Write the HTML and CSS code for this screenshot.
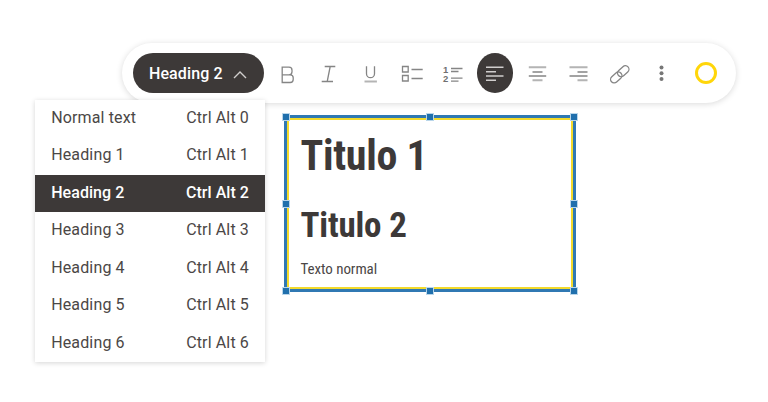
FILE: index.html
```html
<!DOCTYPE html>
<html lang="es">
<head>
<meta charset="utf-8">
<title>Editor</title>
<link rel="stylesheet" href="styles.css">
</head>
<body>
<div class="toolbar">
  <div class="picker">
    <button class="pill">Heading 2 <svg width="14" height="9" viewBox="0 0 14 9"><path d="M1 8 7 2l6 6"/></svg></button>
    <ul class="menu">
      <li><span>Normal text</span><span>Ctrl Alt 0</span></li>
      <li><span>Heading 1</span><span>Ctrl Alt 1</span></li>
      <li class="selected"><span>Heading 2</span><span>Ctrl Alt 2</span></li>
      <li><span>Heading 3</span><span>Ctrl Alt 3</span></li>
      <li><span>Heading 4</span><span>Ctrl Alt 4</span></li>
      <li><span>Heading 5</span><span>Ctrl Alt 5</span></li>
      <li><span>Heading 6</span><span>Ctrl Alt 6</span></li>
    </ul>
  </div>
  <div class="tools">
    <span class="tool"><svg viewBox="0 0 24 24"><path d="M7.200 4.200h6.800a3 3 0 0 1 3 3v1.600a3 3 0 0 1-3 3H7.200zM7.200 11.800h8a3 3 0 0 1 3 3v1.700a3 3 0 0 1-3 3H7.200z"/></svg></span>
    <span class="tool"><svg viewBox="0 0 24 24"><path d="M7.700 3.500h10.600M4.700 18.500h11.300M13.200 3.500l-3 15"/></svg></span>
    <span class="tool"><svg viewBox="0 0 24 24"><path d="M8.500 3.200v7.500a4 4 0 0 0 8 0V3.200"/><path class="soft" d="M6.500 18.500h12.400"/></svg></span>
    <span class="tool"><svg viewBox="0 0 24 24"><path d="M2.500 3.500h5.700v5.500H2.500zM2.500 12.500h5.700v5.500H2.500zM11.500 6.500h11.200M11.500 15.500h11.200"/></svg></span>
    <span class="tool"><svg viewBox="0 0 24 24"><text x="2" y="9.500">1</text><text x="2" y="19.300">2</text><path d="M10 5.500h11.500M10 8.500h7.500M10 15.200h11.500M10 18.200h7.500"/></svg></span>
    <span class="tool active"><svg viewBox="0 0 24 24"><path d="M3 4.300h17.500M3 8.800h10M3 13h17.500M3 17.200h10"/></svg></span>
    <span class="tool"><svg viewBox="0 0 24 24"><path class="soft" d="M3.800 4.300h17.400M7.500 17.300h10"/><path d="M7.500 9h10M3.800 13h17.400"/></svg></span>
    <span class="tool"><svg viewBox="0 0 24 24"><path class="soft" d="M3.500 4.300h18M11.500 17.300h10"/><path d="M11.500 9h10M3.500 13h18"/></svg></span>
    <span class="tool"><svg viewBox="0 0 24 24"><g transform="rotate(-42 12 11)"><rect x="0.500" y="7.500" width="12.800" height="7.200" rx="3.600"/><rect x="9.900" y="7.500" width="12.800" height="7.200" rx="3.600"/></g></svg></span>
    <span class="tool"><svg viewBox="0 0 24 24"><g class="dots"><circle cx="12.500" cy="4.500" r="2"/><circle cx="12.500" cy="10.200" r="2"/><circle cx="12.500" cy="15.900" r="2"/></g></svg></span>
  </div>
  <span class="swatch"></span>
</div>
<div class="card">
  <h1>Titulo 1</h1>
  <h2>Titulo 2</h2>
  <p>Texto normal</p>
  <i class="handle top left"></i><i class="handle top center"></i><i class="handle top right"></i>
  <i class="handle middle left"></i><i class="handle middle right"></i>
  <i class="handle bottom left"></i><i class="handle bottom center"></i><i class="handle bottom right"></i>
</div>
</body>
</html>
```
FILE: styles.css
```css
* { box-sizing: border-box; }
body {
  margin: 0;
  height: 402px;
  padding-top: 43px;
  overflow: hidden;
  background: #fff;
  color: #3d3938;
  font-family: Roboto, "Liberation Sans", sans-serif;
}
.toolbar {
  display: flex;
  align-items: center;
  width: 614px;
  height: 60px;
  margin-left: 122px;
  padding: 0 0 0 10.5px;
  border-radius: 30px;
  background: #fff;
  box-shadow: 0 1px 6px rgba(0, 0, 0, .15);
}
.picker { position: relative; width: 131.5px; }
.pill {
  display: flex;
  align-items: center;
  justify-content: space-between;
  width: 100%;
  height: 40px;
  padding: 1px 17px 0 16.5px;
  border: 0;
  border-radius: 20px;
  background: #3d3938;
  color: #fff;
  font: 500 16px Roboto, sans-serif;
  letter-spacing: .1px;
}
.pill svg { fill: none; stroke: #d0cecd; stroke-width: 1.4; margin-top: 1px; }
.menu {
  position: absolute;
  z-index: 2;
  top: 46.500px;
  left: -97.500px;
  width: 230px;
  margin: 0;
  padding: 0;
  list-style: none;
  background: #fff;
  box-shadow: 0 1px 5px rgba(0, 0, 0, .17);
}
.menu li {
  display: flex;
  align-items: center;
  justify-content: space-between;
  height: 37.500px;
  padding: 0 16px 2.500px 16.200px;
  color: #4b4746;
  font-size: 16px;
  letter-spacing: .14px;
}
.menu .selected { background: #3d3938; color: #fff; font-weight: 500; letter-spacing: .05px; }
.tools { display: flex; margin-left: 2.300px; }
.tool {
  display: flex;
  align-items: center;
  justify-content: center;
  width: 41.600px;
  height: 40px;
}
.tool svg { width: 24px; height: 24px; margin-top: 3px; fill: none; stroke: #858585; stroke-width: 1.300; }
.tool text { fill: #707070; stroke: none; font: 700 9.500px "Liberation Sans", sans-serif; }
.tool .soft { stroke: #b4b4b4; stroke-width: 2; }
.tool .dots { fill: #777; stroke: none; }
.active { position: relative; z-index: 0; }
.active::before {
  content: "";
  position: absolute;
  z-index: -1;
  inset: 0 2.500px;
  border-radius: 50%;
  background: #3d3938;
}
.active svg { stroke: #d0cecd; stroke-width: 1.500; }
.swatch {
  width: 22px;
  height: 22px;
  margin-left: 12.700px;
  border: 3px solid #ffd60a;
  border-radius: 50%;
}
.card {
  position: relative;
  width: 292px;
  height: 177px;
  margin: 12px 0 0 284px;
  padding: 14px 0 0 12px;
  border: 3px solid #3079b3;
  box-shadow: inset 0 0 0 2px #f3da2b;
  font-family: "Roboto Condensed", Roboto, sans-serif;
  font-stretch: 75%;
}
h1, h2, p { margin: 0 0 0 1.500px; white-space: nowrap; }
h1 { font-size: 42px; line-height: 48px; letter-spacing: -.3px; }
h2 { margin-top: 25px; font-size: 35px; line-height: 42px; letter-spacing: -.2px; }
p { margin-top: 13px; font-size: 15px; line-height: 18px; letter-spacing: -.05px; color: #4b4746; }
.handle {
  position: absolute;
  width: 8px;
  height: 8px;
  border: 1px solid #b9d6ea;
  background: #2070ad;
}
.top { top: -5.500px; }
.middle { top: 81.500px; }
.bottom { bottom: -5.500px; }
.left { left: -5.500px; }
.center { left: 139px; }
.right { right: -5px; }
```
